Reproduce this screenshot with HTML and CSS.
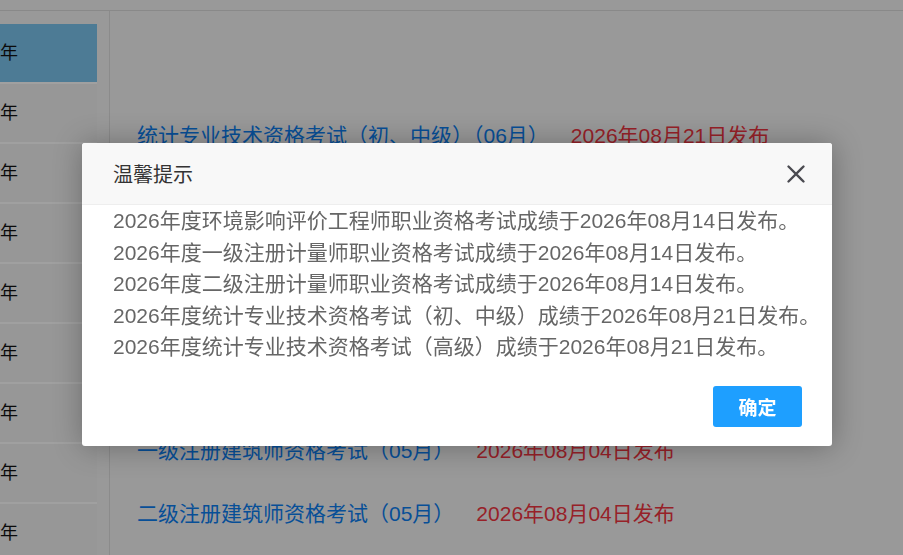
FILE: index.html
```html
<!DOCTYPE html>
<html lang="zh-CN">
<head>
<meta charset="utf-8">
<title>成绩发布</title>
<link rel="stylesheet" href="styles.css">
</head>
<body>
<div class="page">
  <div class="topbar"></div>
  <div class="main">
    <ul class="sidebar">
      <li class="side-item active">2026年</li>
      <li class="side-item">2025年</li>
      <li class="side-item">2024年</li>
      <li class="side-item">2023年</li>
      <li class="side-item">2022年</li>
      <li class="side-item">2021年</li>
      <li class="side-item">2020年</li>
      <li class="side-item">2019年</li>
      <li class="side-item">2018年</li>
    </ul>
    <div class="content">
      <ul class="list">
        <li class="row"><a class="link" href="#">统计专业技术资格考试（初、中级）（06月）</a><span class="date">2026年08月21日发布</span></li>
        <li class="row"><a class="link" href="#">统计专业技术资格考试（高级）（06月）</a><span class="date">2026年08月21日发布</span></li>
        <li class="row"><a class="link" href="#">环境影响评价工程师职业资格考试（05月）</a><span class="date">2026年08月14日发布</span></li>
        <li class="row"><a class="link" href="#">一级注册计量师职业资格考试（05月）</a><span class="date">2026年08月14日发布</span></li>
        <li class="row"><a class="link" href="#">二级注册计量师职业资格考试（05月）</a><span class="date">2026年08月14日发布</span></li>
        <li class="row"><a class="link" href="#">一级注册建筑师资格考试（05月）</a><span class="date">2026年08月04日发布</span></li>
        <li class="row"><a class="link" href="#">二级注册建筑师资格考试（05月）</a><span class="date">2026年08月04日发布</span></li>
      </ul>
    </div>
  </div>
</div>
<div class="shade"></div>
<div class="dialog">
  <div class="dialog-head">
    <span class="dialog-title">温馨提示</span>
    <span class="dialog-close" aria-label="关闭">
      <svg width="20" height="20" viewBox="0 0 20 20"><path d="M2.5 2.5 L17.5 17.5 M17.5 2.5 L2.5 17.5" stroke="#4a4a50" stroke-width="2.3" stroke-linecap="round" fill="none"/></svg>
    </span>
  </div>
  <div class="dialog-body">
    <p class="msg">2026年度环境影响评价工程师职业资格考试成绩于2026年08月14日发布。</p>
    <p class="msg">2026年度一级注册计量师职业资格考试成绩于2026年08月14日发布。</p>
    <p class="msg">2026年度二级注册计量师职业资格考试成绩于2026年08月14日发布。</p>
    <p class="msg">2026年度统计专业技术资格考试（初、中级）成绩于2026年08月21日发布。</p>
    <p class="msg">2026年度统计专业技术资格考试（高级）成绩于2026年08月21日发布。</p>
  </div>
  <div class="dialog-foot">
    <button class="btn-ok">确定</button>
  </div>
</div>
</body>
</html>
```
FILE: styles.css
```css
* { box-sizing: border-box; }
html, body { margin: 0; padding: 0; }
body {
  width: 903px;
  height: 555px;
  overflow: hidden;
  background: #dcdcdc;
  font-family: "Liberation Sans", "Noto Sans CJK SC", sans-serif;
}
.page { height: 555px; display: flex; flex-direction: column; overflow: hidden; }
.topbar {
  flex: 0 0 auto;
  height: 11px;
  border-bottom: 1px solid #c4c4c4;
}
.main { flex: 1; min-height: 0; display: flex; overflow: hidden; }
.sidebar {
  list-style: none;
  margin: 13px 0 0 0;
  padding: 0;
  width: 97px;
  display: flex;
  flex-direction: column;
}
.side-item {
  flex: 0 0 60px;
  height: 60px;
  line-height: 58px;
  border-bottom: 2px solid #e6e6e6;
  background: #d8d8d8;
  font-size: 18px;
  color: #111;
  text-indent: -40px;
  white-space: nowrap;
  overflow: hidden;
}
.side-item.active { background: #6fb0d6; }
.content {
  flex: 1;
  margin-left: 12px;
  border-left: 1px solid #c8c8c8;
  padding: 112px 0 0 27px;
  overflow: hidden;
}
.list { list-style: none; margin: 0; padding: 0; }
.row {
  height: 63px;
  line-height: 26px;
  font-size: 21px;
  white-space: nowrap;
  display: flex;
  gap: 22px;
}
.link { color: #0b72d8; text-decoration: none; }
.date { color: #d8303a; }

.shade {
  position: fixed;
  inset: 0;
  background: rgba(0, 0, 0, 0.3);
}
.dialog {
  position: absolute;
  left: 82px;
  top: 143px;
  width: 750px;
  height: 303px;
  background: #fff;
  border-radius: 3px;
  box-shadow: 1px 1px 30px rgba(0,0,0,0.3);
  display: flex;
  flex-direction: column;
  overflow: hidden;
}
.dialog-head {
  height: 62px;
  background: #f8f8f8;
  border-bottom: 1px solid #eee;
  display: flex;
  align-items: center;
  justify-content: space-between;
  padding: 0 26px 0 31px;
}
.dialog-title { font-size: 20px; color: #333; }
.dialog-close { display: flex; width: 20px; height: 20px; }
.dialog-body {
  flex: 1;
  padding: 0 20px 0 31px;
}
.msg {
  margin: 0;
  font-size: 21px;
  line-height: 31.5px;
  color: #666;
  white-space: nowrap;
}
.dialog-foot {
  display: flex;
  justify-content: flex-end;
  padding: 0 30px 19px 0;
}
.btn-ok {
  width: 89px;
  height: 41px;
  border: 0;
  border-radius: 3px;
  background: #1e9fff;
  color: #fff;
  font-family: "Noto Sans CJK SC", sans-serif;
  font-size: 19px;
  font-weight: 700;
  cursor: pointer;
}
```
